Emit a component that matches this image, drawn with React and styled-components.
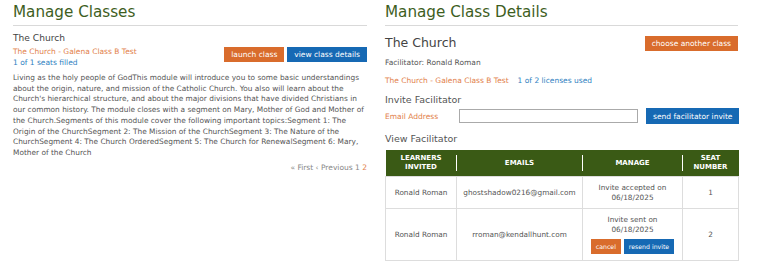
import React from "react";
import styled, { createGlobalStyle } from "styled-components";

const Global = createGlobalStyle`
  html, body { margin: 0; padding: 0; background: #fff; }
  body { font-family: "DejaVu Sans", Verdana, sans-serif; color: #555; }
`;

const ORANGE_TEXT = "#e2804a";
const BLUE_TEXT = "#2f7fc1";

const Page = styled.div`
  display: flex;
  gap: 18px;
  padding: 0 0 0 13px;
  width: 775px;
  box-sizing: border-box;
`;

const Column = styled.section`
  width: ${(p) => p.$w}px;
  flex: none;
  display: flex;
  flex-direction: column;
`;

const Heading = styled.h1`
  margin: 0;
  padding: 3px 0 3px;
  font-weight: normal;
  font-size: 15.2px;
  line-height: 19px;
  color: #3e5e1e;
  border-bottom: 1px solid #d9d9d9;
`;

const Title = styled.div`
  font-size: ${(p) => p.$size}px;
  color: #444;
  line-height: ${(p) => p.$lh}px;
  margin-top: ${(p) => p.$mt || 0}px;
`;

const Small = styled.div`
  font-size: 7.5px;
  line-height: 11px;
  margin-top: ${(p) => p.$mt || 0}px;
  color: ${(p) => (p.$tone === "orange" ? ORANGE_TEXT : p.$tone === "blue" ? BLUE_TEXT : "#555")};
`;

const Inline = styled.span`
  color: ${(p) => (p.$tone === "orange" ? ORANGE_TEXT : BLUE_TEXT)};
  margin-right: ${(p) => p.$mr || 0}px;
`;

const Button = styled.button`
  border: none;
  font-family: inherit;
  font-size: ${(p) => p.$fs || 7.5}px;
  color: #fff;
  background: ${(p) => (p.$tone === "orange" ? "#d96c2c" : "#1669b4")};
  height: ${(p) => p.$h || 15}px;
  padding: 0 ${(p) => p.$px || 7}px;
  margin: 0;
  cursor: pointer;
  white-space: nowrap;
  flex: ${(p) => (p.$grow ? 1 : "none")};
`;

const ClassRow = styled.div`
  display: flex;
  justify-content: space-between;
  align-items: flex-start;
  margin-top: 2px;
`;

const ButtonGroup = styled.div`
  display: flex;
  gap: 3px;
  justify-content: ${(p) => p.$justify || "flex-start"};
  margin-top: ${(p) => p.$mt || 0}px;
`;

const Paragraph = styled.p`
  margin: 5px 0 0;
  font-size: 7.4px;
  line-height: 10.7px;
  color: #555;
`;

const Pager = styled.div`
  margin-top: 3px;
  text-align: right;
  font-size: 7.5px;
  line-height: 11px;
  color: #888;
  span { color: ${ORANGE_TEXT}; }
`;

const DetailHead = styled.div`
  display: flex;
  justify-content: space-between;
  align-items: center;
  margin-top: 9px;
`;

const InviteRow = styled.div`
  display: flex;
  align-items: center;
  margin-top: 2px;
  height: 16px;
`;

const Label = styled.label`
  font-size: 7.5px;
  color: ${ORANGE_TEXT};
  width: 74px;
  flex: none;
`;

const Input = styled.input`
  width: 179px;
  height: 14px;
  box-sizing: border-box;
  border: 1px solid #aaa;
  margin: 0 8px 0 0;
  padding: 0;
  flex: none;
`;

const Section = styled.div`
  font-size: 9.5px;
  line-height: 12px;
  color: #555;
  margin-top: ${(p) => p.$mt}px;
`;

const Table = styled.table`
  margin-top: 5.5px;
  border-collapse: collapse;
  table-layout: fixed;
  width: 353px;
  font-size: 7.3px;
  color: #555;
  text-align: center;
`;

const Th = styled.th`
  background: #3a5a15;
  color: #fff;
  font-weight: bold;
  font-size: 7px;
  line-height: 9px;
  height: 26px;
  width: ${(p) => p.$w}px;
  padding: 0;
  position: relative;
  &:not(:last-child)::after {
    content: "";
    position: absolute;
    right: 0;
    top: 5px;
    bottom: 5px;
    width: 1px;
    background: #fff;
  }
`;

const Td = styled.td`
  border: 1px solid #ddd;
  padding: 0 2px;
  height: ${(p) => p.$h}px;
  line-height: 9.5px;
`;

export default function App() {
  return (
    <>
      <Global />
      <Page>
        <Column $w={354}>
          <Heading>Manage Classes</Heading>
          <Title $size={9.1} $lh={12} $mt={6}>The Church</Title>
          <ClassRow>
            <div>
              <Small $tone="orange">The Church - Galena Class B Test</Small>
              <Small $tone="blue">1 of 1 seats filled</Small>
            </div>
            <ButtonGroup $mt={1}>
              <Button $tone="orange">launch class</Button>
              <Button>view class details</Button>
            </ButtonGroup>
          </ClassRow>
          <Paragraph>
            Living as the holy people of GodThis module will introduce you to some basic understandings
            about the origin, nature, and mission of the Catholic Church. You also will learn about the
            Church's hierarchical structure, and about the major divisions that have divided Christians in
            our common history. The module closes with a segment on Mary, Mother of God and Mother
            of the Church.Segments of this module cover the following important topics:Segment 1: The
            Origin of the ChurchSegment 2: The Mission of the ChurchSegment 3: The Nature of the
            ChurchSegment 4: The Church OrderedSegment 5: The Church for RenewalSegment 6: Mary,
            Mother of the Church
          </Paragraph>
          <Pager>« First ‹ Previous 1 <span>2</span></Pager>
        </Column>
        <Column $w={353}>
          <Heading>Manage Class Details</Heading>
          <DetailHead>
            <Title $size={12.5} $lh={16}>The Church</Title>
            <Button $tone="orange">choose another class</Button>
          </DetailHead>
          <Small $mt={5.5}>Facilitator: Ronald Roman</Small>
          <Small $mt={7}>
            <Inline $tone="orange" $mr={9}>The Church - Galena Class B Test</Inline>
            <Inline>1 of 2 licenses used</Inline>
          </Small>
          <Section $mt={8.5}>Invite Facilitator</Section>
          <InviteRow>
            <Label>Email Address</Label>
            <Input />
            <Button $h={16} $grow>send facilitator invite</Button>
          </InviteRow>
          <Section $mt={8.5}>View Facilitator</Section>
          <Table>
            <thead>
              <tr>
                <Th $w={71}>LEARNERS<br />INVITED</Th>
                <Th $w={126}>EMAILS</Th>
                <Th $w={100}>MANAGE</Th>
                <Th $w={56}>SEAT<br />NUMBER</Th>
              </tr>
            </thead>
            <tbody>
              <tr>
                <Td $h={31}>Ronald Roman</Td>
                <Td>ghostshadow0216@gmail.com</Td>
                <Td>Invite accepted on<br />06/18/2025</Td>
                <Td>1</Td>
              </tr>
              <tr>
                <Td $h={51}>Ronald Roman</Td>
                <Td>rroman@kendallhunt.com</Td>
                <Td>
                  Invite sent on<br />06/18/2025
                  <ButtonGroup $justify="center" $mt={5}>
                    <Button $tone="orange" $fs={6.2} $h={15} $px={5}>cancel</Button>
                    <Button $fs={6.2} $h={15} $px={5}>resend invite</Button>
                  </ButtonGroup>
                </Td>
                <Td>2</Td>
              </tr>
            </tbody>
          </Table>
        </Column>
      </Page>
    </>
  );
}
